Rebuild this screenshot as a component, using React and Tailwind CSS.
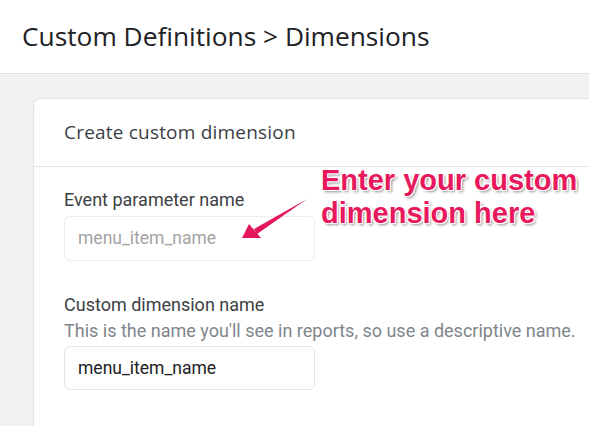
export default function App() {
  return (
    <div className="relative h-[426px] w-[589px] overflow-hidden bg-[#f1f1f1] font-['Roboto',sans-serif]">
      <header className="flex h-[74px] items-center border-b border-[#e0e0e0] bg-white pl-[22px]">
        <h1 className="font-['Open_Sans',sans-serif] text-[26.3px] text-[#202124]">
          Custom Definitions &gt; Dimensions
        </h1>
      </header>

      <main className="pl-[33px] pt-[24px]">
        <section className="h-[400px] rounded-tl-[8px] border-l border-t border-[#e3e3e3] bg-white">
          <div className="flex h-[68px] items-center border-b border-[#e3e3e3] pl-[30px]">
            <h2 className="font-['Open_Sans',sans-serif] text-[19px] tracking-[0.2px] text-[#3c4043]">Create custom dimension</h2>
          </div>

          <div className="pl-[30px] pt-[22px]">
            <label className="block text-[18px] leading-[22px] text-[#3c4043]">Event parameter name</label>
            <div className="mt-[5px] flex h-[45px] w-[251px] items-center rounded-[6px] border border-[#ececec] pl-[13px] text-[17.5px] text-[#a3a3a3]">
              menu_item_name
            </div>

            <label className="mt-[33px] block text-[18px] leading-[22px] text-[#3c4043]">Custom dimension name</label>
            <p className="mt-[4px] text-[18px] leading-[22px] text-[#80868b]">
              This is the name you'll see in reports, so use a descriptive name.
            </p>
            <div className="mt-[4px] flex h-[44px] w-[251px] items-center rounded-[6px] border border-[#e3e3e3] pl-[13px] text-[17.5px] text-[#202124]">
              menu_item_name
            </div>
          </div>
        </section>
      </main>

      <div className="absolute left-[321px] top-[164px] font-['Liberation_Sans',Arial,sans-serif] text-[29px] font-bold leading-[33px] text-[#e8185d] [text-shadow:-1px_-1px_0_#fff,1px_-1px_0_#fff,-1px_1px_0_#fff,1px_1px_0_#fff,0_-1.5px_0_#fff,-1.5px_0_0_#fff,2px_2px_3px_rgba(0,0,0,0.45)]">
        <div>Enter your custom</div>
        <div>dimension here</div>
      </div>

      <svg className="absolute left-[236px] top-[194px]" width="74" height="50" viewBox="0 0 74 50">
        <path d="M71 5 L18 35 L21 40 Z" fill="#e5175b" />
        <path d="M6 44 L13 30 L25 44 Z" fill="#e5175b" />
      </svg>
    </div>
  )
}
